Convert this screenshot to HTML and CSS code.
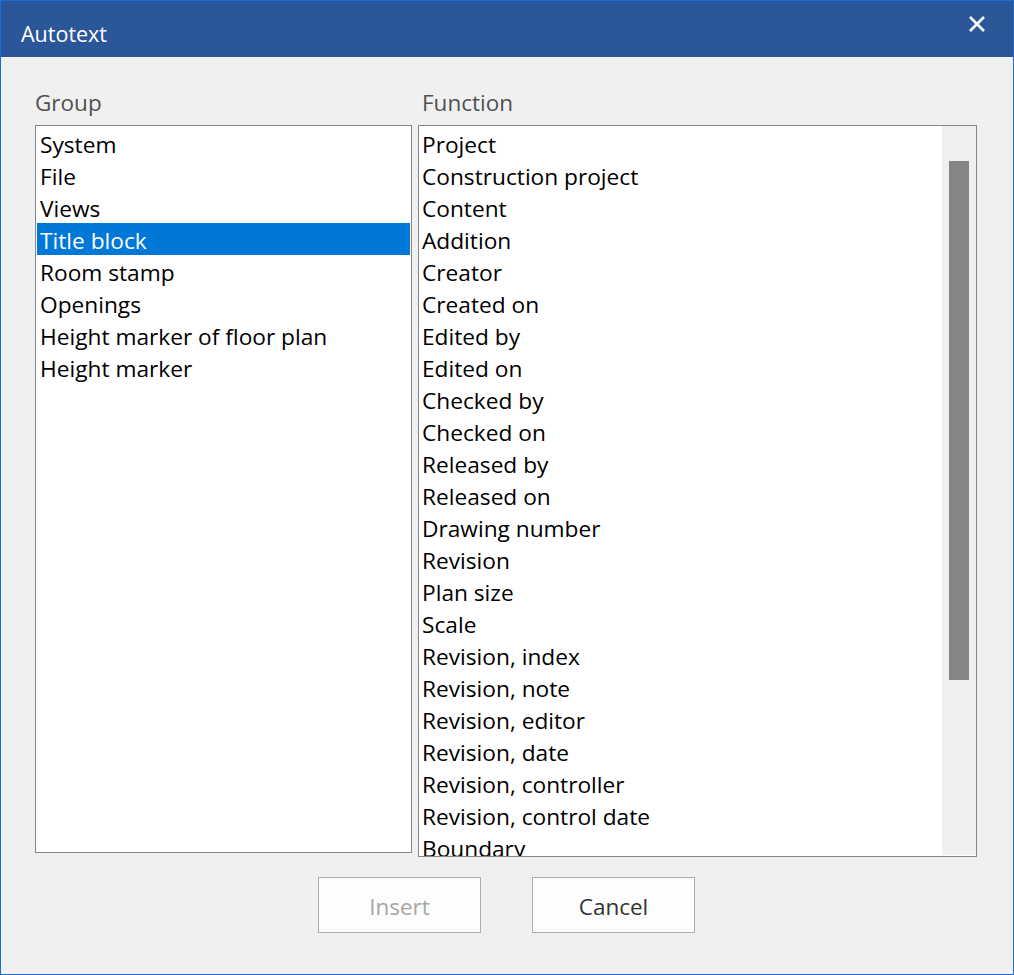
FILE: index.html
```html
<!DOCTYPE html>
<html>
<head>
<meta charset="utf-8">
<link rel="stylesheet" href="styles.css">
</head>
<body>
<div class="window">
  <div class="titlebar">
    <span class="title">Autotext</span>
    <svg class="close" width="18" height="18" viewBox="0 0 18 18"><path d="M2 2 L16 16 M16 2 L2 16" stroke="#fff" stroke-width="2.6" fill="none"/></svg>
  </div>
  <div class="content">
    <div class="panes">
      <div class="pane group">
        <div class="label">Group</div>
        <div class="box">
          <div class="list">
            <div class="item">System</div>
            <div class="item">File</div>
            <div class="item">Views</div>
            <div class="item selected">Title block</div>
            <div class="item">Room stamp</div>
            <div class="item">Openings</div>
            <div class="item">Height marker of floor plan</div>
            <div class="item">Height marker</div>
          </div>
        </div>
      </div>
      <div class="pane function">
        <div class="label">Function</div>
        <div class="box">
          <div class="list">
            <div class="item">Project</div>
            <div class="item">Construction project</div>
            <div class="item">Content</div>
            <div class="item">Addition</div>
            <div class="item">Creator</div>
            <div class="item">Created on</div>
            <div class="item">Edited by</div>
            <div class="item">Edited on</div>
            <div class="item">Checked by</div>
            <div class="item">Checked on</div>
            <div class="item">Released by</div>
            <div class="item">Released on</div>
            <div class="item">Drawing number</div>
            <div class="item">Revision</div>
            <div class="item">Plan size</div>
            <div class="item">Scale</div>
            <div class="item">Revision, index</div>
            <div class="item">Revision, note</div>
            <div class="item">Revision, editor</div>
            <div class="item">Revision, date</div>
            <div class="item">Revision, controller</div>
            <div class="item">Revision, control date</div>
            <div class="item">Boundary</div>
          </div>
          <div class="scrollbar"><div class="thumb"></div></div>
        </div>
      </div>
    </div>
    <div class="buttons">
      <button class="btn disabled">Insert</button>
      <button class="btn">Cancel</button>
    </div>
  </div>
</div>
</body>
</html>
```
FILE: styles.css
```css
* { box-sizing: border-box; }
html, body { margin: 0; padding: 0; background: #f0f0f0; }
body { font-family: "Open Sans", "Noto Sans", sans-serif; }
.window {
  width: 1014px;
  height: 975px;
  border: 1px solid #1a6fd2;
  background: #f0f0f0;
  display: flex;
  flex-direction: column;
}
.titlebar {
  height: 56px;
  background: #2b579a;
  display: flex;
  align-items: center;
  justify-content: space-between;
  padding: 0 27px 0 20px;
  color: #fff;
}
.title { font-size: 21.5px; line-height: 24px; margin-top: 10px; }
.close { margin-top: -10px; }
.content { padding: 34px 0 0 34px; }
.panes { display: flex; gap: 6px; align-items: flex-start; }
.label {
  font-size: 22.5px;
  line-height: 24px;
  color: #505050;
  height: 34px;
  padding-left: 0;
}
.function .label { padding-left: 4px; }
.box {
  border: 1px solid #828790;
  background: #fff;
  position: relative;
  overflow: hidden;
}
.group .box { width: 377px; height: 728px; padding: 1px; }
.function .box { width: 559px; height: 732px; padding: 1px 0 0 0; display: flex; }
.list { flex: 1; }
.item {
  height: 32px;
  line-height: 32px;
  font-size: 22.7px;
  color: #000;
  padding-left: 3px;
  padding-top: 2px;
  white-space: nowrap;
}
.item.selected { background: #0078d7; color: #fff; }
.scrollbar {
  width: 34px;
  height: 729px;
  margin-top: -1px;
  background: #f0f0f0;
  padding: 35px 7px 0 7px;
  flex: none;
}
.thumb { width: 20px; height: 519px; background: #858585; }
.buttons {
  display: flex;
  justify-content: center;
  gap: 51px;
  margin-top: 20px;
  padding-right: 35px;
}
.btn {
  width: 163px;
  height: 56px;
  background: #fdfdfd;
  border: 1px solid #adadad;
  font-family: "Open Sans", "Noto Sans", sans-serif;
  font-size: 22.5px;
  color: #333;
  padding: 2px 0 0 0;
}
.btn.disabled { color: #a6a6a6; }
```
